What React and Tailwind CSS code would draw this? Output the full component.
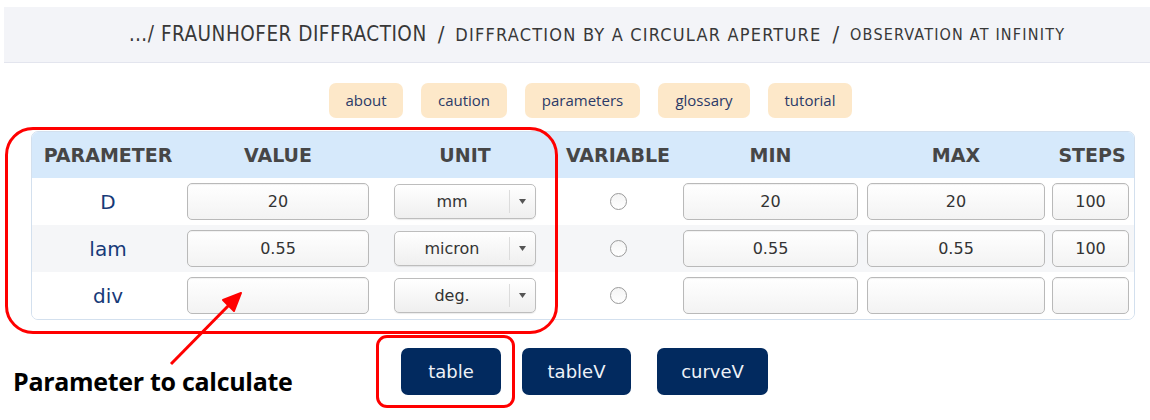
import React from "react";

const cols = "grid grid-cols-[152px_188px_186px_120px_185px_186px_86px]";

function Field({ value, w }) {
  return (
    <div
      className={`${w} h-[37px] flex items-center justify-center rounded-[5px] border border-[#b9b9b9] bg-gradient-to-b from-white to-[#f3f3f3] shadow-[inset_0_1px_1px_rgba(0,0,0,0.06)] text-[16px] text-[#333]`}
    >
      {value}
    </div>
  );
}

function Select({ value }) {
  return (
    <div className="w-[142px] h-[35px] flex items-center rounded-[5px] border border-[#bdbdbd] bg-gradient-to-b from-white to-[#efefef] shadow-[0_1px_1px_rgba(0,0,0,0.08)] text-[16px] text-[#333]">
      <div className="flex-1 text-center">{value}</div>
      <div className="w-[26px] h-[23px] border-l border-[#dcdcdc] flex items-center justify-center">
        <svg width="7" height="5" viewBox="0 0 7 5">
          <path d="M0 0 L7 0 L3.5 5 Z" fill="#555" />
        </svg>
      </div>
    </div>
  );
}

function Radio() {
  return (
    <div className="w-[17px] h-[17px] rounded-full border border-[#9a9a9a] bg-gradient-to-b from-[#f4f4f4] to-white" />
  );
}

function Row({ name, value, unit, min, max, steps, bg }) {
  return (
    <div className={`${cols} h-[47px] items-center ${bg}`}>
      <div className="text-center text-[20px] text-[#173a78]">{name}</div>
      <div className="flex justify-center">
        <Field value={value} w="w-[182px]" />
      </div>
      <div className="flex justify-center">
        <Select value={unit} />
      </div>
      <div className="flex justify-center">
        <Radio />
      </div>
      <div className="flex justify-center">
        <Field value={min} w="w-[175px]" />
      </div>
      <div className="flex justify-center">
        <Field value={max} w="w-[178px]" />
      </div>
      <div className="flex justify-center pr-[3px]">
        <Field value={steps} w="w-[77px]" />
      </div>
    </div>
  );
}

export default function App() {
  return (
    <div
      className="relative w-[1150px] h-[420px] bg-white overflow-hidden"
      style={{ fontFamily: '"DejaVu Sans", sans-serif' }}
    >
      {/* header */}
      <div
        className="ml-[4px] mt-[7px] h-[56px] bg-[#f3f4f8] border-b border-[#e3e5ee] flex items-center justify-center pl-[40px] text-[#383838]"
        style={{ fontFamily: '"DejaVu Sans Condensed", "DejaVu Sans", sans-serif' }}
      >
        <span className="text-[20.5px] tracking-[0.5px]">…/ FRAUNHOFER DIFFRACTION</span>
        <span className="text-[22px] mx-[11px]">/</span>
        <span className="text-[18px] tracking-[1.2px]">DIFFRACTION BY A CIRCULAR APERTURE</span>
        <span className="text-[22px] mx-[11px]">/</span>
        <span className="text-[16px] tracking-[1.2px]">OBSERVATION AT INFINITY</span>
      </div>

      {/* nav */}
      <div className="mt-[20px] flex justify-center gap-[18px] pl-[31px]" style={{ fontFamily: '"Open Sans", sans-serif' }}>
        {[
          ["about", "w-[74px]"],
          ["caution", "w-[86px]"],
          ["parameters", "w-[115px]"],
          ["glossary", "w-[92px]"],
          ["tutorial", "w-[84px]"],
        ].map(([t, w]) => (
          <div key={t} className={`${w} h-[35px] rounded-[7px] bg-[#fde8c9] flex items-center justify-center text-[15px] text-[#2b3a68]`}>
            {t}
          </div>
        ))}
      </div>

      {/* table */}
      <div className="ml-[31px] mt-[13px] w-[1104px] rounded-[7px] border border-[#d3e0ee] overflow-hidden">
        <div className={`${cols} h-[46px] items-center bg-[#d6e9fb] text-[19px] font-bold text-[#464646]`}>
          <div className="text-center">PARAMETER</div>
          <div className="text-center">VALUE</div>
          <div className="text-center">UNIT</div>
          <div className="text-center">VARIABLE</div>
          <div className="text-center">MIN</div>
          <div className="text-center">MAX</div>
          <div className="text-center">STEPS</div>
        </div>
        <Row name="D" value="20" unit="mm" min="20" max="20" steps="100" bg="bg-white" />
        <Row name="lam" value="0.55" unit="micron" min="0.55" max="0.55" steps="100" bg="bg-[#f5f6f8]" />
        <Row name="div" value="" unit="deg." min="" max="" steps="" bg="bg-white" />
      </div>

      {/* action buttons */}
      <div className="mt-[28px] flex ml-[401px]">
        <div className="w-[100px] h-[47px] rounded-[7px] bg-[#022a5f] flex items-center justify-center text-[18px] text-[#eef2f8]">table</div>
        <div className="ml-[21px] w-[109px] h-[47px] rounded-[7px] bg-[#022a5f] flex items-center justify-center text-[18px] text-[#eef2f8]">tableV</div>
        <div className="ml-[26px] w-[111px] h-[47px] rounded-[7px] bg-[#022a5f] flex items-center justify-center text-[18px] text-[#eef2f8]">curveV</div>
      </div>

      {/* annotations */}
      <div className="absolute left-[5px] top-[127px] w-[553px] h-[207px] rounded-[28px] border-[3px] border-[#ff0000]" />
      <div className="absolute left-[376px] top-[335px] w-[139px] h-[73px] rounded-[11px] border-[3px] border-[#ff0000]" />
      <svg className="absolute left-0 top-0" width="1150" height="420">
        <line x1="171" y1="364" x2="232" y2="302" stroke="#ff0000" strokeWidth="3" />
        <path d="M241 293 L223 300 L234 311 Z" fill="#ff0000" stroke="#ff0000" strokeWidth="2" strokeLinejoin="round" />
      </svg>
      <div
        className="absolute left-[13px] top-[366px] text-[25px] font-bold text-black leading-[30px] tracking-[-0.3px]"
        style={{ fontFamily: '"Open Sans", "Liberation Sans", sans-serif' }}
      >
        Parameter to calculate
      </div>
    </div>
  );
}
